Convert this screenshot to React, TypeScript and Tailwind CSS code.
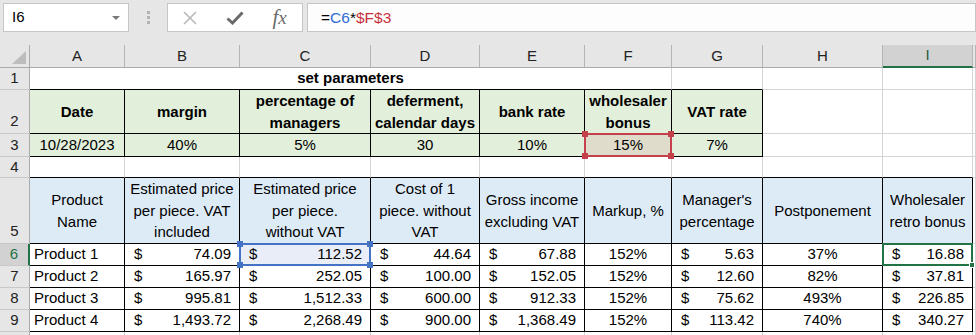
import clsx from "clsx"
import type { ReactNode } from "react"

type CellProps = { className?: string; rb?: boolean; bb?: boolean; children?: ReactNode }

function Cell({ className, rb, bb, children }: CellProps) {
  return (
    <div
      className={clsx(
        "relative flex items-center min-w-0 border-r border-b whitespace-nowrap",
        rb ? "border-r-black" : "border-r-[#d4d4d4]",
        bb ? "border-b-black" : "border-b-[#d4d4d4]",
        className,
      )}
    >
      {children}
    </div>
  )
}

function Acc({ v, hl }: { v: string; hl?: ReactNode }) {
  return (
    <Cell rb bb className="justify-between pl-[9px] pr-[8px]">
      {hl}
      <span className="relative z-20">$</span>
      <span className="relative z-20">{v}</span>
    </Cell>
  )
}

function RowHead({ n, sel, tall }: { n?: number; sel?: boolean; tall?: boolean }) {
  return (
    <div
      className={clsx(
        "flex justify-center border-b border-b-[#c8c8c8]",
        sel ? "bg-[#d2d2d2] border-r-2 border-r-[#217346] text-[#217346]" : "bg-[#e6e6e6] border-r border-r-[#ababab] text-[#222]",
        tall ? "items-end pb-[1px]" : "items-center",
      )}
    >
      {n}
    </div>
  )
}

function ColHead({ l, sel }: { l: string; sel?: boolean }) {
  return (
    <div
      className={clsx(
        "flex items-center justify-center border-r border-r-[#b4b4b4]",
        sel ? "bg-[#d2d2d2] border-b-2 border-b-[#217346] text-[#1e5e3c]" : "bg-[#e6e6e6] border-b border-b-[#ababab] text-[#222]",
      )}
    >
      {l}
    </div>
  )
}

// formula reference / selection frame with corner handles
function Frame({ color, fill, handles, fillHandle }: { color: string; fill: string; handles?: boolean; fillHandle?: boolean }) {
  const sq = "absolute w-[6px] h-[6px]"
  return (
    <div className="absolute -inset-px z-10 border-2" style={{ borderColor: color, background: fill }}>
      {handles && (
        <>
          <span className={clsx(sq, "-left-[4px] -top-[4px]")} style={{ background: color }} />
          <span className={clsx(sq, "-right-[4px] -top-[4px]")} style={{ background: color }} />
          <span className={clsx(sq, "-left-[4px] -bottom-[4px]")} style={{ background: color }} />
          <span className={clsx(sq, "-right-[4px] -bottom-[4px]")} style={{ background: color }} />
        </>
      )}
      {fillHandle && <span className={clsx(sq, "-right-[4px] -bottom-[4px] border border-white")} style={{ background: color }} />}
    </div>
  )
}

const rows = [
  ["74.09", "112.52", "44.64", "67.88", "152%", "5.63", "37%", "16.88"],
  ["165.97", "252.05", "100.00", "152.05", "152%", "12.60", "82%", "37.81"],
  ["995.81", "1,512.33", "600.00", "912.33", "152%", "75.62", "493%", "226.85"],
  ["1,493.72", "2,268.49", "900.00", "1,368.49", "152%", "113.42", "740%", "340.27"],
]

const params = [
  ["Date"],
  ["margin"],
  ["percentage of", "managers"],
  ["deferment,", "calendar days"],
  ["bank rate"],
  ["wholesaler", "bonus"],
  ["VAT rate"],
]

const heads = [
  ["Product", "Name"],
  ["Estimated price", "per piece. VAT", "included"],
  ["Estimated price", "per piece.", "without VAT"],
  ["Cost of 1", "piece. without", "VAT"],
  ["Gross income", "excluding VAT"],
  ["Markup, %"],
  ["Manager's", "percentage"],
  ["Postponement"],
  ["Wholesaler", "retro bonus"],
]

function Lines({ l }: { l: string[] }) {
  return (
    <div className="w-full text-center">
      {l.map((t) => (
        <div key={t}>{t}</div>
      ))}
    </div>
  )
}

function FormulaBar() {
  return (
    <div className="h-[45px] bg-[#e6e6e6] flex items-start pt-[3px]">
      <div className="ml-[3px] w-[126px] h-[29px] bg-white border border-[#c6c6c6] flex items-center justify-between pl-[8px] pr-[8px]">
        <span>I6</span>
        <svg width="8" height="4" viewBox="0 0 8 4">
          <path d="M0 0h8L4 4z" fill="#7a7a7a" />
        </svg>
      </div>
      <div className="w-[38px] h-[29px] flex flex-col items-center justify-center gap-[2px]">
        <span className="w-[3px] h-[3px] bg-[#b3b3b3]" />
        <span className="w-[3px] h-[3px] bg-[#b3b3b3]" />
        <span className="w-[3px] h-[3px] bg-[#b3b3b3]" />
      </div>
      <div className="w-[136px] h-[29px] bg-white border border-[#c6c6c6] grid grid-cols-3 items-center">
        <div className="flex justify-center">
          <svg width="16" height="16" viewBox="0 0 16 16">
            <path d="M2 2l12 12M14 2L2 14" stroke="#b8b8b8" strokeWidth="1.6" />
          </svg>
        </div>
        <div className="flex justify-center">
          <svg width="18" height="14" viewBox="0 0 18 14">
            <path d="M1.5 7.5l5 4.5L16.5 1.5" stroke="#6b6b6b" strokeWidth="3" fill="none" />
          </svg>
        </div>
        <div className="flex justify-center">
          <span className="font-['Liberation_Serif',serif] italic text-[19px] text-[#6b6b6b] leading-none">
            <span className="text-[21px]">f</span>x
          </span>
        </div>
      </div>
      <div className="ml-[4px] flex-1 h-[29px] bg-[#fdfdfd] border border-[#c6c6c6] flex items-center pl-[13px] text-[15.5px]">
        <span>=</span>
        <span className="text-[#2f6cd6]">C6</span>
        <span>*</span>
        <span className="text-[#c8323c]">$F$3</span>
      </div>
    </div>
  )
}

export default function App() {
  return (
    <div className="w-[976px] h-[335px] overflow-hidden bg-white font-['Liberation_Sans',Arial,sans-serif] text-[15px] text-black">
      <FormulaBar />
      <div className="grid grid-cols-[30px_95px_115px_131px_109px_105px_87px_91px_120px_90px_1fr] grid-rows-[23px_22px_44px_23px_21px_66px_22px_22px_22px_22px_22px] h-[290px] overflow-hidden">
        {/* column headers */}
        <div className="bg-[#e6e6e6] border-r border-r-[#ababab] border-b border-b-[#ababab] flex items-end justify-end pr-[3px] pb-[3px]">
          <svg width="14" height="13" viewBox="0 0 14 13">
            <path d="M14 0V13H0z" fill="#bdbdbd" />
          </svg>
        </div>
        {["A", "B", "C", "D", "E", "F", "G", "H"].map((l) => (
          <ColHead key={l} l={l} />
        ))}
        <ColHead l="I" sel />
        <ColHead l="" />

        {/* row 1 */}
        <RowHead n={1} />
        <Cell bb className="col-span-6 justify-center font-bold">set parameters</Cell>
        <Cell bb />
        <Cell />
        <Cell />
        <Cell />

        {/* row 2 */}
        <RowHead n={2} tall />
        {params.map((p) => (
          <Cell key={p[0]} rb bb className="bg-[#e2efda] font-bold leading-[22px]">
            <Lines l={p} />
          </Cell>
        ))}
        <Cell />
        <Cell />
        <Cell />

        {/* row 3 */}
        <RowHead n={3} />
        {["10/28/2023", "40%", "5%", "30", "10%"].map((v) => (
          <Cell key={v} rb bb className="bg-[#e2efda] justify-center">
            {v}
          </Cell>
        ))}
        <Cell rb bb className="bg-[#e2efda] justify-center">
          <Frame color="#c4404a" fill="#dfdccb" handles />
          <span className="relative z-20">15%</span>
        </Cell>
        <Cell rb bb className="bg-[#e2efda] justify-center">
          7%
        </Cell>
        <Cell />
        <Cell />
        <Cell />

        {/* row 4 */}
        <RowHead n={4} />
        {Array.from({ length: 9 }).map((_, i) => (
          <Cell key={i} bb />
        ))}
        <Cell />

        {/* row 5 */}
        <RowHead n={5} tall />
        {heads.map((h) => (
          <Cell key={h.join()} rb bb className="bg-[#ddebf7] leading-[21.5px]">
            <Lines l={h} />
          </Cell>
        ))}
        <Cell />

        {/* rows 6-9 */}
        {rows.map((r, i) => (
          <div key={i} className="contents">
            <RowHead n={6 + i} sel={i === 0} />
            <Cell rb bb className="pl-[4px]">
              Product {i + 1}
            </Cell>
            <Acc v={r[0]} />
            <Acc v={r[1]} hl={i === 0 ? <Frame color="#4472c4" fill="#e8edf8" handles /> : undefined} />
            <Acc v={r[2]} />
            <Acc v={r[3]} />
            <Cell rb bb className="justify-center">
              {r[4]}
            </Cell>
            <Acc v={r[5]} />
            <Cell rb bb className="justify-center">
              {r[6]}
            </Cell>
            <Acc v={r[7]} hl={i === 0 ? <Frame color="#217346" fill="#ffffff" fillHandle /> : undefined} />
            <Cell />
          </div>
        ))}

        {/* row 10, only a sliver shows */}
        <RowHead />
        {Array.from({ length: 10 }).map((_, i) => (
          <Cell key={i} />
        ))}
      </div>
    </div>
  )
}
